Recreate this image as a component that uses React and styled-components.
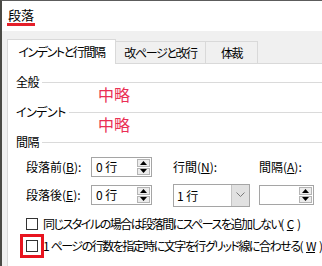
import React from "react";
import styled, { createGlobalStyle } from "styled-components";

const GlobalStyle = createGlobalStyle`
  html, body {
    margin: 0;
    padding: 0;
    background: #ffffff;
  }
`;

const Window = styled.div`
  width: 320px;
  height: 265px;
  border-top: 1px solid #5c5c5c;
  border-left: 2px solid #4a4a45;
  background: #f0f0f0;
  overflow: hidden;
  display: flex;
  flex-direction: column;
  font-family: "Noto Sans CJK JP", "Noto Sans", sans-serif;
  font-size: 12px;
  font-feature-settings: "palt" 1;
  color: #000;
  white-space: nowrap;
`;

const TitleBar = styled.div`
  height: 30px;
  flex: none;
  background: #ffffff;
  padding-left: 5px;
  display: flex;
  align-items: flex-start;
`;

const Title = styled.span`
  margin-top: 5px;
  padding: 0 1px;
  font-size: 13px;
  line-height: 17px;
  border-bottom: 3px solid #e51f2a;
`;

const TabStrip = styled.div`
  flex: none;
  display: flex;
  align-items: flex-end;
  height: 33px;
  box-sizing: border-box;
  padding: 8px 0 0 5px;
`;

const Tab = styled.div`
  box-sizing: border-box;
  width: ${(p) => p.$w}px;
  height: ${(p) => (p.$active ? 25 : 23)}px;
  background: ${(p) => (p.$active ? "#ffffff" : "#f0f0f0")};
  border: 1px solid #d9d9d9;
  border-left: ${(p) => (p.$active ? "1px solid #d9d9d9" : "none")};
  border-bottom: ${(p) => (p.$active ? "none" : "1px solid #d9d9d9")};
  display: flex;
  align-items: center;
  justify-content: center;
  padding-bottom: ${(p) => (p.$active ? 2 : 0)}px;
  letter-spacing: -1.4px;
`;

const TabFill = styled.div`
  flex: 1;
  align-self: stretch;
  border-bottom: 1px solid #d9d9d9;
`;

const Panel = styled.div`
  flex: 1;
  background: #ffffff;
  margin-left: 5px;
  border-left: 1px solid #d9d9d9;
  padding: 12px 0 0 8px;
`;

const Group = styled.div`
  & + & {
    margin-top: 6px;
  }
`;

const GroupHead = styled.div`
  display: flex;
  align-items: center;
  gap: 3px;
  height: 12px;
  line-height: 12px;
  letter-spacing: -0.5px;

  &::after {
    content: "";
    flex: 1;
    height: 1px;
    background: #dadada;
  }
`;

const Omitted = styled.div`
  margin-left: 82px;
  font-size: 16px;
  line-height: 12px;
  height: 12px;
  color: #ea2f55;
`;

const FieldGrid = styled.div`
  margin: 9px 0 0 10px;
  display: grid;
  grid-template-columns: 65px 82px 86px 56px;
  grid-auto-rows: 20px;
  row-gap: 8px;
  align-items: center;
`;

const Label = styled.span`
  line-height: 16px;
`;

const SpinBox = styled.div`
  box-sizing: border-box;
  width: ${(p) => p.$w}px;
  height: 20px;
  border: 1px solid #a5a5a5;
  background: #fff;
  display: flex;
  align-items: center;
`;

const SpinValue = styled.span`
  flex: 1;
  padding-left: 4px;
  line-height: 16px;
`;

const SpinButtons = styled.div`
  align-self: stretch;
  width: 13px;
  display: flex;
  flex-direction: column;
  gap: 1px;
  padding: 1px 1px 1px 0;
`;

const SpinButton = styled.div`
  flex: 1;
  background: #ececec;
  border: 1px solid #b4b4b4;
  display: flex;
  align-items: center;
  justify-content: center;
`;

const Select = styled.div`
  box-sizing: border-box;
  width: 77px;
  height: 23px;
  border: 1px solid #a5a5a5;
  background: #fff;
  display: flex;
  align-items: stretch;
`;

const SelectValue = styled.span`
  flex: 1;
  padding-left: 3px;
  display: flex;
  align-items: center;
`;

const SelectButton = styled.div`
  width: 17px;
  background: #e1e1e1;
  border-left: 1px solid #c4c4c4;
  display: flex;
  align-items: center;
  justify-content: center;
`;

const Options = styled.div`
  margin: 10px 0 0 10px;
  display: flex;
  flex-direction: column;
  gap: 4px;
`;

const CheckRow = styled.label`
  display: flex;
  align-items: center;
  gap: 4px;
  height: 18px;
  line-height: 18px;
  letter-spacing: -1.5px;
`;

const CheckBox = styled.span`
  box-sizing: border-box;
  flex: none;
  width: 12px;
  height: 12px;
  margin-right: 1px;
  border: 1px solid #333;
  background: #fff;
  outline: ${(p) => (p.$marked ? "3px solid #e8141f" : "none")};
  outline-offset: 3px;
`;

const Arrow = ({ down }) => (
  <svg width="7" height="4" viewBox="0 0 7 4">
    <polygon points={down ? "0,0 7,0 3.5,4" : "0,4 7,4 3.5,0"} fill="#000" />
  </svg>
);

const Chevron = () => (
  <svg width="9" height="6" viewBox="0 0 9 6">
    <polyline points="0.5,0.5 4.5,4.5 8.5,0.5" fill="none" stroke="#7a7a7a" strokeWidth="1" />
  </svg>
);

const Spinner = ({ value, w = 61 }) => (
  <SpinBox $w={w}>
    <SpinValue>{value}</SpinValue>
    <SpinButtons>
      <SpinButton>
        <Arrow />
      </SpinButton>
      <SpinButton>
        <Arrow down />
      </SpinButton>
    </SpinButtons>
  </SpinBox>
);

export default function App() {
  return (
    <>
      <GlobalStyle />
      <Window>
        <TitleBar>
          <Title>段落</Title>
        </TitleBar>
        <TabStrip>
          <Tab $active $w={109}>インデントと行間隔</Tab>
          <Tab $w={90}>改ページと改行</Tab>
          <Tab $w={52}>体裁</Tab>
          <TabFill />
        </TabStrip>
        <Panel>
          <Group>
            <GroupHead>全般</GroupHead>
            <Omitted>中略</Omitted>
          </Group>
          <Group>
            <GroupHead>インデント</GroupHead>
            <Omitted>中略</Omitted>
          </Group>
          <Group>
            <GroupHead>間隔</GroupHead>
            <FieldGrid>
              <Label>
                段落前(<u>B</u>):
              </Label>
              <Spinner value="0 行" />
              <Label>
                行間(<u>N</u>):
              </Label>
              <Label>
                間隔(<u>A</u>):
              </Label>
              <Label>
                段落後(<u>E</u>):
              </Label>
              <Spinner value="0 行" />
              <Select>
                <SelectValue>1 行</SelectValue>
                <SelectButton>
                  <Chevron />
                </SelectButton>
              </Select>
              <Spinner value="" w={55} />
            </FieldGrid>
          </Group>
          <Options>
            <CheckRow>
              <CheckBox />
              同じスタイルの場合は段落間にスペースを追加しない(<u>C</u>)
            </CheckRow>
            <CheckRow>
              <CheckBox $marked />
              1&nbsp;&nbsp;ページの行数を指定時に文字を行グリッド線に合わせる(<u>W</u>)
            </CheckRow>
          </Options>
        </Panel>
      </Window>
    </>
  );
}
